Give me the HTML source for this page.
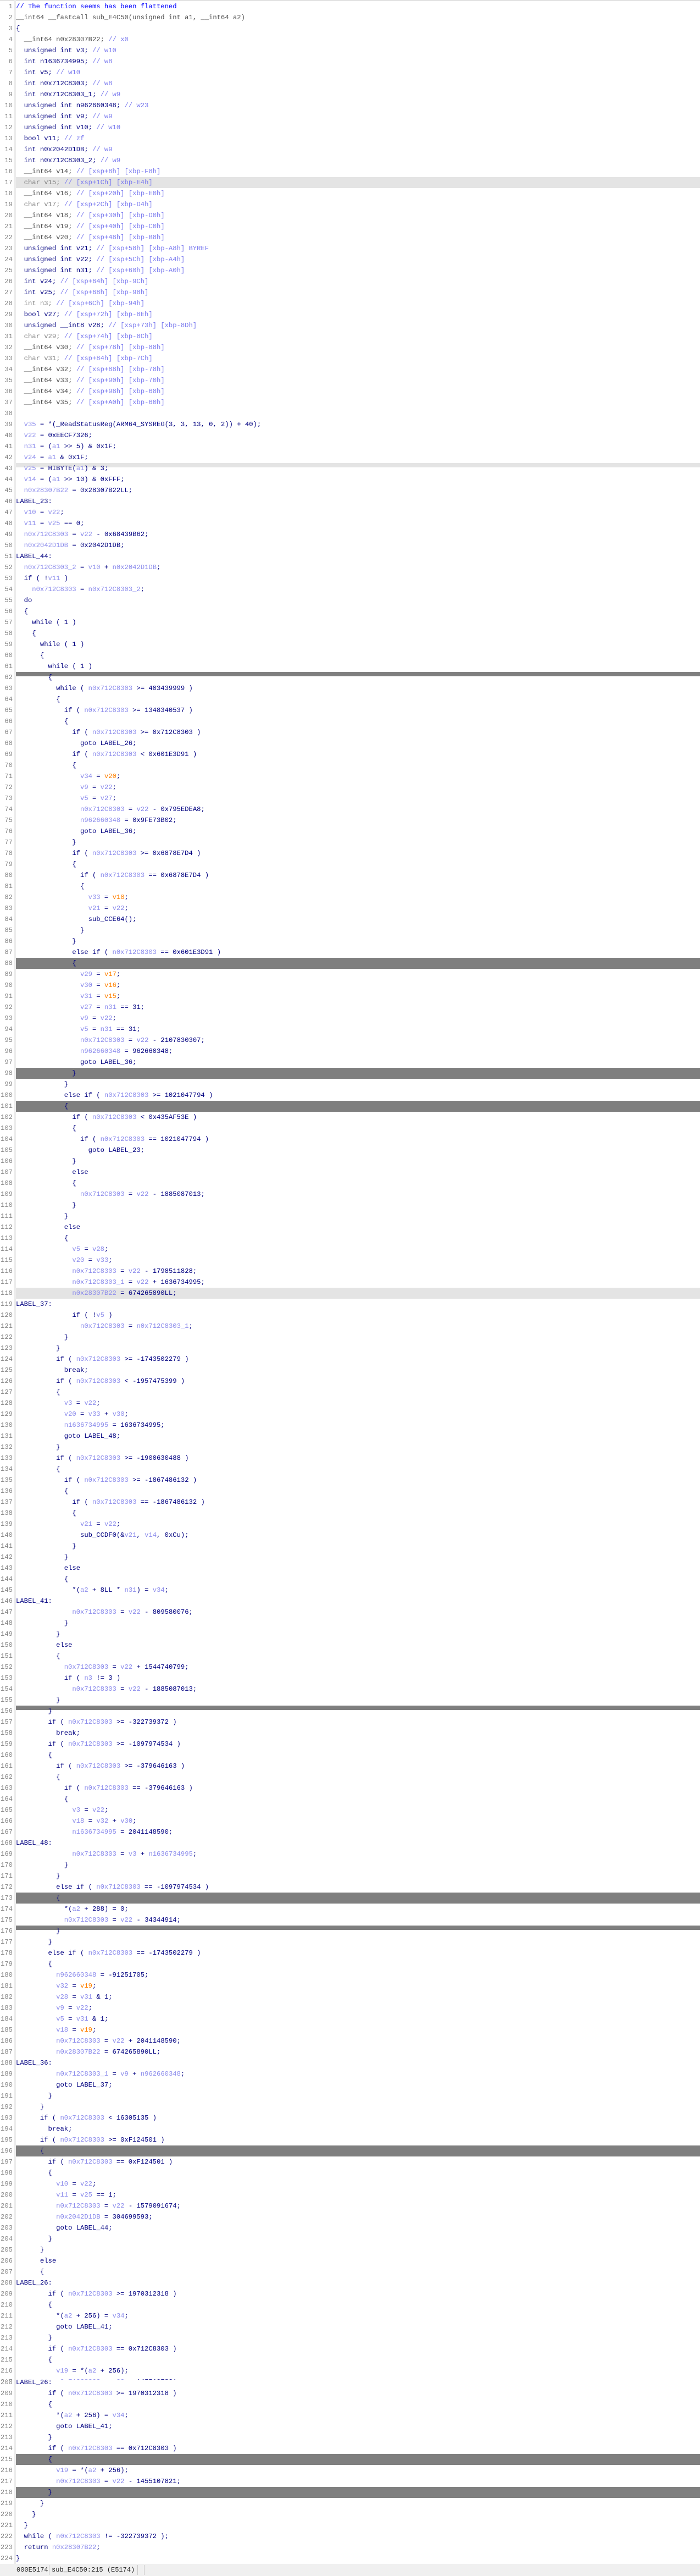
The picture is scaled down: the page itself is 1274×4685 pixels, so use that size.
<!DOCTYPE html>
<html><head><meta charset="utf-8">
<style>
html,body{margin:0;padding:0;background:#fff;}
body{width:1274px;height:4685px;position:relative;overflow:hidden;font-family:"Liberation Mono","DejaVu Sans Mono",monospace;font-size:12.2px;color:#000080;}
.topbar{position:absolute;left:0;top:0;width:1274px;height:2px;background:#e2e2e2;}
.strip{position:absolute;left:25px;top:0;width:4px;height:4663px;background:#ececec;}
.blk{position:absolute;left:0;width:1274px;overflow:hidden;}
#A{top:0;height:4328px;counter-reset:ln 0;}
#B{top:4328px;height:335px;counter-reset:ln 207;}
#A .in{padding-top:2px;}
#B .in{margin-top:-5px;}
.r{height:20px;line-height:20px;white-space:pre;padding-left:29px;position:relative;box-sizing:border-box;}
.r::before{counter-increment:ln;content:counter(ln);position:absolute;left:0;top:0;width:23px;text-align:right;color:#858585;}
.h1{background:#e4e4e4;background-clip:content-box;}
.h2{background:#7f7f7f;background-clip:content-box;}
.band{position:absolute;left:29px;width:1245px;}
i{font-style:normal;color:#8c8cec;}
b{font-weight:normal;color:#ff8000;}
u{text-decoration:none;color:#7b7bef;}
s{text-decoration:none;color:#808080;}
em{font-style:normal;color:#505050;}
.c1{color:#0000ff;}
.status{position:absolute;left:0;top:4663px;width:1274px;height:22px;background:#f0f0f0;font-family:"Liberation Mono",monospace;font-size:12px;color:#222;line-height:22px;}
.status span{position:absolute;top:0;}
.sep{position:absolute;top:2px;width:1px;height:18px;background:#c8c8c8;}
</style></head><body>
<div class="topbar"></div>
<div class="strip"></div>
<div class="band" style="top:842px;height:8px;background:#e4e4e4"></div>
<div class="band" style="top:1222px;height:8px;background:#7f7f7f"></div>
<div class="band" style="top:3102px;height:8px;background:#7f7f7f"></div>
<div class="band" style="top:3502px;height:8px;background:#7f7f7f"></div>
<div class="blk" id="A"><div class="in">
<div class="r"><span class="c1">// The function seems has been flattened</span></div>
<div class="r"><em>__int64 __fastcall sub_E4C50(unsigned int a1, __int64 a2)</em></div>
<div class="r">{</div>
<div class="r">  <em>__int64 n0x28307B22;</em> <u>// x0</u></div>
<div class="r">  unsigned int v3; <u>// w10</u></div>
<div class="r">  int n1636734995; <u>// w8</u></div>
<div class="r">  int v5; <u>// w10</u></div>
<div class="r">  int n0x712C8303; <u>// w8</u></div>
<div class="r">  int n0x712C8303_1; <u>// w9</u></div>
<div class="r">  unsigned int n962660348; <u>// w23</u></div>
<div class="r">  unsigned int v9; <u>// w9</u></div>
<div class="r">  unsigned int v10; <u>// w10</u></div>
<div class="r">  bool v11; <u>// zf</u></div>
<div class="r">  int n0x2042D1DB; <u>// w9</u></div>
<div class="r">  int n0x712C8303_2; <u>// w9</u></div>
<div class="r">  <em>__int64 v14;</em> <u>// [xsp+8h] [xbp-F8h]</u></div>
<div class="r h1">  <s>char v15;</s> <u>// [xsp+1Ch] [xbp-E4h]</u></div>
<div class="r">  <em>__int64 v16;</em> <u>// [xsp+20h] [xbp-E0h]</u></div>
<div class="r">  <s>char v17;</s> <u>// [xsp+2Ch] [xbp-D4h]</u></div>
<div class="r">  <em>__int64 v18;</em> <u>// [xsp+30h] [xbp-D0h]</u></div>
<div class="r">  <em>__int64 v19;</em> <u>// [xsp+40h] [xbp-C0h]</u></div>
<div class="r">  <em>__int64 v20;</em> <u>// [xsp+48h] [xbp-B8h]</u></div>
<div class="r">  unsigned int v21; <u>// [xsp+58h] [xbp-A8h] BYREF</u></div>
<div class="r">  unsigned int v22; <u>// [xsp+5Ch] [xbp-A4h]</u></div>
<div class="r">  unsigned int n31; <u>// [xsp+60h] [xbp-A0h]</u></div>
<div class="r">  int v24; <u>// [xsp+64h] [xbp-9Ch]</u></div>
<div class="r">  int v25; <u>// [xsp+68h] [xbp-98h]</u></div>
<div class="r">  <s>int n3;</s> <u>// [xsp+6Ch] [xbp-94h]</u></div>
<div class="r">  bool v27; <u>// [xsp+72h] [xbp-8Eh]</u></div>
<div class="r">  unsigned __int8 v28; <u>// [xsp+73h] [xbp-8Dh]</u></div>
<div class="r">  <s>char v29;</s> <u>// [xsp+74h] [xbp-8Ch]</u></div>
<div class="r">  <em>__int64 v30;</em> <u>// [xsp+78h] [xbp-88h]</u></div>
<div class="r">  <s>char v31;</s> <u>// [xsp+84h] [xbp-7Ch]</u></div>
<div class="r">  <em>__int64 v32;</em> <u>// [xsp+88h] [xbp-78h]</u></div>
<div class="r">  <em>__int64 v33;</em> <u>// [xsp+90h] [xbp-70h]</u></div>
<div class="r">  <em>__int64 v34;</em> <u>// [xsp+98h] [xbp-68h]</u></div>
<div class="r">  <em>__int64 v35;</em> <u>// [xsp+A0h] [xbp-60h]</u></div>
<div class="r"> </div>
<div class="r">  <i>v35</i> = *(_ReadStatusReg(ARM64_SYSREG(3, 3, 13, 0, 2)) + 40);</div>
<div class="r">  <i>v22</i> = 0xEECF7326;</div>
<div class="r">  <i>n31</i> = (<i>a1</i> &gt;&gt; 5) &amp; 0x1F;</div>
<div class="r">  <i>v24</i> = <i>a1</i> &amp; 0x1F;</div>
<div class="r">  <i>v25</i> = HIBYTE(<i>a1</i>) &amp; 3;</div>
<div class="r">  <i>v14</i> = (<i>a1</i> &gt;&gt; 10) &amp; 0xFFF;</div>
<div class="r">  <i>n0x28307B22</i> = 0x28307B22LL;</div>
<div class="r">LABEL_23:</div>
<div class="r">  <i>v10</i> = <i>v22</i>;</div>
<div class="r">  <i>v11</i> = <i>v25</i> == 0;</div>
<div class="r">  <i>n0x712C8303</i> = <i>v22</i> - 0x68439B62;</div>
<div class="r">  <i>n0x2042D1DB</i> = 0x2042D1DB;</div>
<div class="r">LABEL_44:</div>
<div class="r">  <i>n0x712C8303_2</i> = <i>v10</i> + <i>n0x2042D1DB</i>;</div>
<div class="r">  if ( !<i>v11</i> )</div>
<div class="r">    <i>n0x712C8303</i> = <i>n0x712C8303_2</i>;</div>
<div class="r">  do</div>
<div class="r">  {</div>
<div class="r">    while ( 1 )</div>
<div class="r">    {</div>
<div class="r">      while ( 1 )</div>
<div class="r">      {</div>
<div class="r">        while ( 1 )</div>
<div class="r">        {</div>
<div class="r">          while ( <i>n0x712C8303</i> &gt;= 403439999 )</div>
<div class="r">          {</div>
<div class="r">            if ( <i>n0x712C8303</i> &gt;= 1348340537 )</div>
<div class="r">            {</div>
<div class="r">              if ( <i>n0x712C8303</i> &gt;= 0x712C8303 )</div>
<div class="r">                goto LABEL_26;</div>
<div class="r">              if ( <i>n0x712C8303</i> &lt; 0x601E3D91 )</div>
<div class="r">              {</div>
<div class="r">                <i>v34</i> = <b>v20</b>;</div>
<div class="r">                <i>v9</i> = <i>v22</i>;</div>
<div class="r">                <i>v5</i> = <i>v27</i>;</div>
<div class="r">                <i>n0x712C8303</i> = <i>v22</i> - 0x795EDEA8;</div>
<div class="r">                <i>n962660348</i> = 0x9FE73B02;</div>
<div class="r">                goto LABEL_36;</div>
<div class="r">              }</div>
<div class="r">              if ( <i>n0x712C8303</i> &gt;= 0x6878E7D4 )</div>
<div class="r">              {</div>
<div class="r">                if ( <i>n0x712C8303</i> == 0x6878E7D4 )</div>
<div class="r">                {</div>
<div class="r">                  <i>v33</i> = <b>v18</b>;</div>
<div class="r">                  <i>v21</i> = <i>v22</i>;</div>
<div class="r">                  sub_CCE64();</div>
<div class="r">                }</div>
<div class="r">              }</div>
<div class="r">              else if ( <i>n0x712C8303</i> == 0x601E3D91 )</div>
<div class="r h2">              {</div>
<div class="r">                <i>v29</i> = <b>v17</b>;</div>
<div class="r">                <i>v30</i> = <b>v16</b>;</div>
<div class="r">                <i>v31</i> = <b>v15</b>;</div>
<div class="r">                <i>v27</i> = <i>n31</i> == 31;</div>
<div class="r">                <i>v9</i> = <i>v22</i>;</div>
<div class="r">                <i>v5</i> = <i>n31</i> == 31;</div>
<div class="r">                <i>n0x712C8303</i> = <i>v22</i> - 2107830307;</div>
<div class="r">                <i>n962660348</i> = 962660348;</div>
<div class="r">                goto LABEL_36;</div>
<div class="r h2">              }</div>
<div class="r">            }</div>
<div class="r">            else if ( <i>n0x712C8303</i> &gt;= 1021047794 )</div>
<div class="r h2">            {</div>
<div class="r">              if ( <i>n0x712C8303</i> &lt; 0x435AF53E )</div>
<div class="r">              {</div>
<div class="r">                if ( <i>n0x712C8303</i> == 1021047794 )</div>
<div class="r">                  goto LABEL_23;</div>
<div class="r">              }</div>
<div class="r">              else</div>
<div class="r">              {</div>
<div class="r">                <i>n0x712C8303</i> = <i>v22</i> - 1885087013;</div>
<div class="r">              }</div>
<div class="r">            }</div>
<div class="r">            else</div>
<div class="r">            {</div>
<div class="r">              <i>v5</i> = <i>v28</i>;</div>
<div class="r">              <i>v20</i> = <i>v33</i>;</div>
<div class="r">              <i>n0x712C8303</i> = <i>v22</i> - 1798511828;</div>
<div class="r">              <i>n0x712C8303_1</i> = <i>v22</i> + 1636734995;</div>
<div class="r h1">              <i>n0x28307B22</i> = 674265890LL;</div>
<div class="r">LABEL_37:</div>
<div class="r">              if ( !<i>v5</i> )</div>
<div class="r">                <i>n0x712C8303</i> = <i>n0x712C8303_1</i>;</div>
<div class="r">            }</div>
<div class="r">          }</div>
<div class="r">          if ( <i>n0x712C8303</i> &gt;= -1743502279 )</div>
<div class="r">            break;</div>
<div class="r">          if ( <i>n0x712C8303</i> &lt; -1957475399 )</div>
<div class="r">          {</div>
<div class="r">            <i>v3</i> = <i>v22</i>;</div>
<div class="r">            <i>v20</i> = <i>v33</i> + <i>v30</i>;</div>
<div class="r">            <i>n1636734995</i> = 1636734995;</div>
<div class="r">            goto LABEL_48;</div>
<div class="r">          }</div>
<div class="r">          if ( <i>n0x712C8303</i> &gt;= -1900630488 )</div>
<div class="r">          {</div>
<div class="r">            if ( <i>n0x712C8303</i> &gt;= -1867486132 )</div>
<div class="r">            {</div>
<div class="r">              if ( <i>n0x712C8303</i> == -1867486132 )</div>
<div class="r">              {</div>
<div class="r">                <i>v21</i> = <i>v22</i>;</div>
<div class="r">                sub_CCDF0(&amp;<i>v21</i>, <i>v14</i>, 0xCu);</div>
<div class="r">              }</div>
<div class="r">            }</div>
<div class="r">            else</div>
<div class="r">            {</div>
<div class="r">              *(<i>a2</i> + 8LL * <i>n31</i>) = <i>v34</i>;</div>
<div class="r">LABEL_41:</div>
<div class="r">              <i>n0x712C8303</i> = <i>v22</i> - 809580076;</div>
<div class="r">            }</div>
<div class="r">          }</div>
<div class="r">          else</div>
<div class="r">          {</div>
<div class="r">            <i>n0x712C8303</i> = <i>v22</i> + 1544740799;</div>
<div class="r">            if ( <i>n3</i> != 3 )</div>
<div class="r">              <i>n0x712C8303</i> = <i>v22</i> - 1885087013;</div>
<div class="r">          }</div>
<div class="r">        }</div>
<div class="r">        if ( <i>n0x712C8303</i> &gt;= -322739372 )</div>
<div class="r">          break;</div>
<div class="r">        if ( <i>n0x712C8303</i> &gt;= -1097974534 )</div>
<div class="r">        {</div>
<div class="r">          if ( <i>n0x712C8303</i> &gt;= -379646163 )</div>
<div class="r">          {</div>
<div class="r">            if ( <i>n0x712C8303</i> == -379646163 )</div>
<div class="r">            {</div>
<div class="r">              <i>v3</i> = <i>v22</i>;</div>
<div class="r">              <i>v18</i> = <i>v32</i> + <i>v30</i>;</div>
<div class="r">              <i>n1636734995</i> = 2041148590;</div>
<div class="r">LABEL_48:</div>
<div class="r">              <i>n0x712C8303</i> = <i>v3</i> + <i>n1636734995</i>;</div>
<div class="r">            }</div>
<div class="r">          }</div>
<div class="r">          else if ( <i>n0x712C8303</i> == -1097974534 )</div>
<div class="r h2">          {</div>
<div class="r">            *(<i>a2</i> + 288) = 0;</div>
<div class="r">            <i>n0x712C8303</i> = <i>v22</i> - 34344914;</div>
<div class="r">          }</div>
<div class="r">        }</div>
<div class="r">        else if ( <i>n0x712C8303</i> == -1743502279 )</div>
<div class="r">        {</div>
<div class="r">          <i>n962660348</i> = -91251705;</div>
<div class="r">          <i>v32</i> = <b>v19</b>;</div>
<div class="r">          <i>v28</i> = <i>v31</i> &amp; 1;</div>
<div class="r">          <i>v9</i> = <i>v22</i>;</div>
<div class="r">          <i>v5</i> = <i>v31</i> &amp; 1;</div>
<div class="r">          <i>v18</i> = <b>v19</b>;</div>
<div class="r">          <i>n0x712C8303</i> = <i>v22</i> + 2041148590;</div>
<div class="r">          <i>n0x28307B22</i> = 674265890LL;</div>
<div class="r">LABEL_36:</div>
<div class="r">          <i>n0x712C8303_1</i> = <i>v9</i> + <i>n962660348</i>;</div>
<div class="r">          goto LABEL_37;</div>
<div class="r">        }</div>
<div class="r">      }</div>
<div class="r">      if ( <i>n0x712C8303</i> &lt; 16305135 )</div>
<div class="r">        break;</div>
<div class="r">      if ( <i>n0x712C8303</i> &gt;= 0xF124501 )</div>
<div class="r h2">      {</div>
<div class="r">        if ( <i>n0x712C8303</i> == 0xF124501 )</div>
<div class="r">        {</div>
<div class="r">          <i>v10</i> = <i>v22</i>;</div>
<div class="r">          <i>v11</i> = <i>v25</i> == 1;</div>
<div class="r">          <i>n0x712C8303</i> = <i>v22</i> - 1579091674;</div>
<div class="r">          <i>n0x2042D1DB</i> = 304699593;</div>
<div class="r">          goto LABEL_44;</div>
<div class="r">        }</div>
<div class="r">      }</div>
<div class="r">      else</div>
<div class="r">      {</div>
<div class="r">LABEL_26:</div>
<div class="r">        if ( <i>n0x712C8303</i> &gt;= 1970312318 )</div>
<div class="r">        {</div>
<div class="r">          *(<i>a2</i> + 256) = <i>v34</i>;</div>
<div class="r">          goto LABEL_41;</div>
<div class="r">        }</div>
<div class="r">        if ( <i>n0x712C8303</i> == 0x712C8303 )</div>
<div class="r">        {</div>
<div class="r">          <i>v19</i> = *(<i>a2</i> + 256);</div>
<div class="r">          <i>n0x712C8303</i> = <i>v22</i> - 1455107821;</div>
</div></div>
<div class="blk" id="B"><div class="in">
<div class="r">LABEL_26:</div>
<div class="r">        if ( <i>n0x712C8303</i> &gt;= 1970312318 )</div>
<div class="r">        {</div>
<div class="r">          *(<i>a2</i> + 256) = <i>v34</i>;</div>
<div class="r">          goto LABEL_41;</div>
<div class="r">        }</div>
<div class="r">        if ( <i>n0x712C8303</i> == 0x712C8303 )</div>
<div class="r h2">        {</div>
<div class="r">          <i>v19</i> = *(<i>a2</i> + 256);</div>
<div class="r">          <i>n0x712C8303</i> = <i>v22</i> - 1455107821;</div>
<div class="r h2">        }</div>
<div class="r">      }</div>
<div class="r">    }</div>
<div class="r">  }</div>
<div class="r">  while ( <i>n0x712C8303</i> != -322739372 );</div>
<div class="r">  return <i>n0x28307B22</i>;</div>
<div class="r">}</div>
</div></div>
<div class="status">
<span style="left:30px">000E5174</span>
<div class="sep" style="left:89px"></div>
<span style="left:94px">sub_E4C50:215 (E5174)</span>
<div class="sep" style="left:250px"></div>
<div class="sep" style="left:262px"></div>
</div>
</body></html>
